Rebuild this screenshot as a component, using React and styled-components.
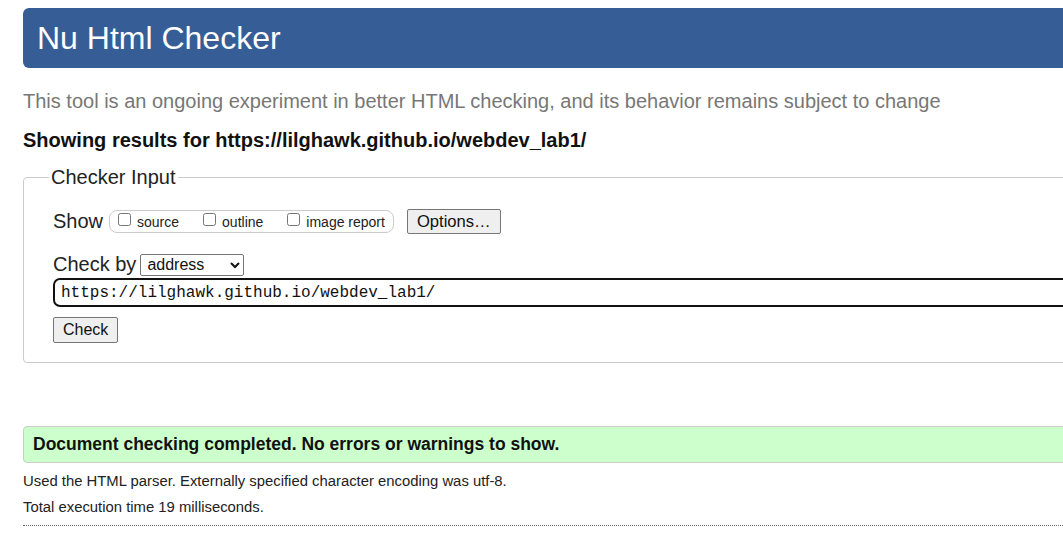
import styled, { createGlobalStyle } from "styled-components";

const GlobalStyle = createGlobalStyle`
    html, body {
        margin: 0;
        padding: 0;
        overflow: hidden;
        background: #fff;
        font-family: "Liberation Sans", Arial, sans-serif;
        color: #222;
    }
`;

const Page = styled.div`
    padding: 8px 0 0 23px;
    width: calc(100% + 60px);
    box-sizing: border-box;
`;

const Banner = styled.h1`
    margin: 0;
    height: 60px;
    background: #365d95;
    border-radius: 6px 0 0 6px;
    color: #fff;
    font-weight: normal;
    font-size: 32px;
    line-height: 60px;
    padding-left: 14px;
`;

const Tagline = styled.p`
    margin: 20px 0 0;
    font-size: 20px;
    line-height: 26px;
    color: #777;
`;

const Results = styled.h2`
    margin: 13px 0 0;
    font-size: 20px;
    line-height: 26px;
    color: #111;
`;

const Fieldset = styled.fieldset`
    margin: 13px 0 0;
    padding: 20px 29px 19px 29px;
    border: 1px solid #ccc;
    border-radius: 4px;
`;

const Legend = styled.legend`
    font-size: 20px;
    padding: 0 2px;
    margin-left: -4px;
    color: #222;
`;

const Row = styled.div`
    display: flex;
    align-items: center;
    gap: ${(p) => p.$gap || 6}px;
    margin-bottom: ${(p) => p.$mb || 0}px;
`;

const Label = styled.span`
    font-size: 20px;
    color: #222;
`;

const ChoiceGroup = styled.div`
    display: flex;
    align-items: center;
    height: 21px;
    border: 1px solid #ccc;
    border-radius: 8px;
    padding: 0 8px 0 8px;
    gap: 24px;
    margin-right: 7px;
`;

const Choice = styled.label`
    display: flex;
    align-items: center;
    font-size: 14px;
    color: #222;
`;

const Box = styled.input`
    width: 13px;
    height: 13px;
    margin: 0 6px 4px 0;
`;

const Button = styled.button`
    font-family: "Liberation Sans", Arial, sans-serif;
    font-size: ${(p) => p.$size || 16}px;
    color: #111;
    background: #efefef;
    border: 1px solid #767676;
    border-radius: 2px;
    height: ${(p) => p.$h || 26}px;
    padding: 0 9px;
`;

const Select = styled.select`
    font-family: "Liberation Sans", Arial, sans-serif;
    font-size: 16px;
    width: 104px;
    height: 22px;
    border: 1px solid #767676;
    border-radius: 2px;
    background: #fff;
    color: #111;
    padding: 0 2px;
`;

const UrlInput = styled.input`
    display: block;
    width: calc(100% + 40px);
    box-sizing: border-box;
    height: 29px;
    border: 2px solid #111;
    border-radius: 7px;
    font-family: "Liberation Mono", "Courier New", monospace;
    font-size: 16px;
    padding: 0 6px;
    margin: 2px 0 10px;
    color: #111;
`;

const Success = styled.div`
    margin-top: 63px;
    background: #ccffcc;
    border: 1px solid #ccc;
    border-radius: 4px 0 0 4px;
    padding: 0 9px;
    height: 35px;
    display: flex;
    align-items: center;
    font-weight: bold;
    font-size: 17.5px;
    color: #111;
`;

const Details = styled.p`
    margin: ${(p) => p.$mt || 0}px 0 0;
    font-size: 14.85px;
    line-height: 18px;
    color: #222;
`;

const Rule = styled.hr`
    margin: 9px 0 0;
    border: none;
    border-top: 1px dotted #666;
`;

const App = () => {
    return (
        <Page>
            <GlobalStyle />
            <Banner>Nu Html Checker</Banner>
            <Tagline>
                This tool is an ongoing experiment in better HTML checking, and its behavior remains subject to change
            </Tagline>
            <Results>Showing results for https://lilghawk.github.io/webdev_lab1/</Results>
            <Fieldset>
                <Legend>Checker Input</Legend>
                <Row $mb={19}>
                    <Label>Show</Label>
                    <ChoiceGroup>
                        <Choice><Box type="checkbox" />source</Choice>
                        <Choice><Box type="checkbox" />outline</Choice>
                        <Choice><Box type="checkbox" />image report</Choice>
                    </ChoiceGroup>
                    <Button $size={16.6} $h={25}>Options…</Button>
                </Row>
                <Row $gap={4}>
                    <Label>Check by</Label>
                    <Select defaultValue="address">
                        <option value="address">address</option>
                        <option value="file">file upload</option>
                        <option value="text">text input</option>
                    </Select>
                </Row>
                <UrlInput defaultValue="https://lilghawk.github.io/webdev_lab1/" />
                <Button>Check</Button>
            </Fieldset>
            <Success>Document checking completed. No errors or warnings to show.</Success>
            <Details $mt={9}>Used the HTML parser. Externally specified character encoding was utf-8.</Details>
            <Details $mt={8}>Total execution time 19 milliseconds.</Details>
            <Rule />
        </Page>
    );
};

export default App;
